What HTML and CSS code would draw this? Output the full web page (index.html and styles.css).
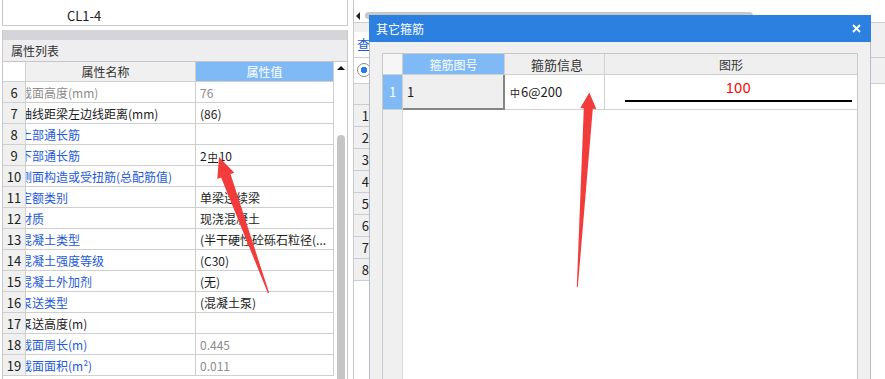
FILE: index.html
```html
<!DOCTYPE html>
<html lang="zh-CN">
<head>
  <meta charset="UTF-8">
  <meta name="viewport" content="width=device-width, initial-scale=1.0">
  <title>属性列表 - 其它箍筋</title>
  <link rel="stylesheet" href="styles.css">
</head>
<body>
  <div class="app">
    <div class="left">
      <div class="top-box"><span class="comp-name">CL1-4</span></div>
      <div class="prop-panel">
        <div class="panel-strip"></div>
        <div class="panel-title">属性列表</div>
        <div class="prop-body">
          <div class="prop-grid">
            <div class="cell num head-blank"></div>
            <div class="cell head">属性名称</div>
            <div class="cell head head-active">属性值</div>

            <div class="cell num">6</div>
            <div class="cell name gray">截面高度(mm)</div>
            <div class="cell val gray">76</div>

            <div class="cell num">7</div>
            <div class="cell name">轴线距梁左边线距离(mm)</div>
            <div class="cell val">(86)</div>

            <div class="cell num">8</div>
            <div class="cell name blue">上部通长筋</div>
            <div class="cell val"></div>

            <div class="cell num">9</div>
            <div class="cell name blue">下部通长筋</div>
            <div class="cell val">2<span class="rebar">中</span>10</div>

            <div class="cell num">10</div>
            <div class="cell name blue">侧面构造或受扭筋(总配筋值)</div>
            <div class="cell val"></div>

            <div class="cell num">11</div>
            <div class="cell name blue">定额类别</div>
            <div class="cell val">单梁连续梁</div>

            <div class="cell num">12</div>
            <div class="cell name blue">材质</div>
            <div class="cell val">现浇混凝土</div>

            <div class="cell num">13</div>
            <div class="cell name blue">混凝土类型</div>
            <div class="cell val">(半干硬性砼砾石粒径(...</div>

            <div class="cell num">14</div>
            <div class="cell name blue">混凝土强度等级</div>
            <div class="cell val">(C30)</div>

            <div class="cell num">15</div>
            <div class="cell name blue">混凝土外加剂</div>
            <div class="cell val">(无)</div>

            <div class="cell num">16</div>
            <div class="cell name blue">泵送类型</div>
            <div class="cell val">(混凝土泵)</div>

            <div class="cell num">17</div>
            <div class="cell name">泵送高度(m)</div>
            <div class="cell val"></div>

            <div class="cell num">18</div>
            <div class="cell name blue">截面周长(m)</div>
            <div class="cell val gray">0.445</div>

            <div class="cell num">19</div>
            <div class="cell name blue">截面面积(m²)</div>
            <div class="cell val gray">0.011</div>
          </div>
          <div class="vscroll">
            <span class="up-arrow"></span>
            <div class="vthumb"></div>
          </div>
        </div>
      </div>
    </div>

    <div class="splitter"></div>

    <div class="right">
      <div class="hbar">
        <span class="left-arrow"></span>
        <div class="hthumb"></div>
      </div>
      <div class="tabs">
        <div class="tab">查询</div>
      </div>
      <div class="radios">
        <div class="radio-group"><span class="radio"></span></div>
      </div>
      <div class="list">
        <div class="list-head"></div>
        <div class="list-row">1</div>
        <div class="list-row">2</div>
        <div class="list-row">3</div>
        <div class="list-row">4</div>
        <div class="list-row">5</div>
        <div class="list-row">6</div>
        <div class="list-row">7</div>
        <div class="list-row">8</div>
        <div class="list-rest"></div>
      </div>
    </div>

    <div class="dialog">
      <div class="dialog-title">
        <span>其它箍筋</span>
        <svg class="close" width="9" height="9" viewBox="0 0 9 9">
          <path d="M1 1 L8 8 M8 1 L1 8" stroke="#fff" stroke-width="1.8" fill="none"/>
        </svg>
      </div>
      <div class="dialog-body">
        <div class="stirrup-table">
          <div class="st-row st-head">
            <div class="st-cell st-num st-corner"></div>
            <div class="st-cell st-id head-active">箍筋图号</div>
            <div class="st-cell st-info">箍筋信息</div>
            <div class="st-cell st-shape">图形</div>
          </div>
          <div class="st-row st-data">
            <div class="st-cell st-num num-active">1</div>
            <div class="st-cell st-id editing">1</div>
            <div class="st-cell st-info"><span class="phi">中</span>6@200</div>
            <div class="st-cell st-shape">
              <div class="shape">
                <span class="dim">100</span>
                <div class="bar-line"></div>
              </div>
            </div>
          </div>
          <div class="st-rest">
            <div class="st-num-fill"></div>
          </div>
        </div>
      </div>
    </div>

    <svg class="marks" width="885" height="379" viewBox="0 0 885 379">
      <polygon points="219,157 234.3,172.7 230.5,174.1 269.1,292.8 267.9,293.2 221.1,177.5 217.3,178.9" fill="#f23b3b"/>
      <polygon points="589.3,92.5 596.3,109 592.8,108.8 577.8,287 576.8,287 583.8,108.2 580.3,108" fill="#f23b3b"/>
    </svg>
  </div>
</body>
</html>
```

FILE: styles.css
```css
* {
  box-sizing: border-box;
}

html, body {
  margin: 0;
  width: 885px;
  height: 379px;
  overflow: hidden;
}

body {
  font-family: "Noto Sans CJK SC", "Noto Sans", sans-serif;
  font-size: 12px;
  color: #1c1c1c;
  background: #fff;
}

.app {
  position: relative;
  display: flex;
  height: 379px;
  overflow: hidden;
}

/* left: property list */

.left {
  width: 348px;
  padding-left: 2px;
  display: flex;
  flex-direction: column;
}

.top-box {
  height: 26px;
  border: 1px solid #c9c9c9;
  border-top: none;
  padding: 6px 0 0 64px;
  line-height: 20px;
  font-size: 13px;
}

.prop-panel {
  flex: 1;
  min-height: 0;
  margin-top: 4px;
  border-left: 1px solid #c9c9c9;
  border-right: 1px solid #c9c9c9;
  display: flex;
  flex-direction: column;
}

.panel-strip {
  height: 10px;
  background: #d5d5d9;
}

.panel-title {
  height: 22px;
  line-height: 21px;
  padding-left: 8px;
  background: #eeeef0;
  border-bottom: 1px solid #c6c6c6;
  color: #333;
}

.prop-body {
  flex: 1;
  min-height: 0;
  display: flex;
  overflow: hidden;
}

.prop-grid {
  width: 331px;
  display: grid;
  grid-template-columns: 23px 170px 138px;
  grid-template-rows: 20px;
  grid-auto-rows: 21px;
  align-content: start;
  overflow: hidden;
}

.cell {
  border-right: 1px solid #cfcfcf;
  border-bottom: 1px solid #cfcfcf;
  line-height: 22px;
  white-space: nowrap;
  overflow: hidden;
}

.num {
  background: #f0f0f0;
  text-align: center;
  font-size: 13px;
  color: #222;
}

.head-blank {
  background: #fff;
}

.head {
  background: #f0f0f0;
  text-align: center;
  padding-right: 10px;
  line-height: 20px;
  color: #333;
}

.head-active {
  background: #7fbaf6;
  color: #fff;
}

.prop-grid .head-active {
  padding-right: 0;
}

.name {
  text-indent: -6px;
}

.val {
  padding-left: 4px;
}

.blue {
  color: #2459d8;
}

.gray {
  color: #8c8c8c;
}

.rebar {
  display: inline-block;
  font-size: 10px;
  line-height: 11px;
  border-bottom: 1px solid #1c1c1c;
  margin: 0 1px;
}

.vscroll {
  position: relative;
  width: 13px;
}

.up-arrow {
  position: absolute;
  top: 4px;
  left: 3px;
  border-left: 4px solid transparent;
  border-right: 4px solid transparent;
  border-bottom: 4px solid #111;
}

.vthumb {
  position: absolute;
  top: 73px;
  bottom: 0;
  left: 3px;
  width: 8px;
  border-radius: 4px 4px 0 0;
  background: #c5c5c5;
}

.splitter {
  width: 5px;
}

/* right: partly hidden list */

.right {
  flex: 1;
  border-left: 1px solid #c9c9c9;
  display: flex;
  flex-direction: column;
}

.hbar {
  height: 23px;
  border-bottom: 1px solid #cdcdcd;
  display: flex;
  align-items: center;
  padding: 9px 0 0 2px;
  column-gap: 5px;
}

.left-arrow {
  border-top: 4px solid transparent;
  border-bottom: 4px solid transparent;
  border-right: 4px solid #222;
}

.hthumb {
  width: 388px;
  height: 7px;
  border-radius: 4px;
  background: #c8c8c8;
}

.tabs {
  height: 35px;
  background: #f0f0f0;
  border-bottom: 1px solid #cdcdcd;
  display: flex;
  align-items: flex-end;
}

.tab {
  width: 80px;
  height: 25px;
  line-height: 24px;
  padding-left: 3px;
  background: #fff;
  color: #2459d8;
  font-size: 13px;
}

.radios {
  height: 26px;
  background: #f0f0f0;
  border-bottom: 1px solid #cdcdcd;
}

.radio-group {
  width: 300px;
  height: 100%;
  background: #fff;
  padding: 5px 0 0 3px;
}

.radio {
  display: block;
  width: 14px;
  height: 14px;
  border-radius: 50%;
  border: 1px solid #8a8a8a;
  background: radial-gradient(circle, #2a7ce0 0 3px, #fff 3.5px);
}

.list {
  flex: 1;
  display: flex;
  flex-direction: column;
}

.list-head {
  height: 21px;
  width: 16px;
  background: #f0f0f0;
  border-bottom: 1px solid #c9ccd6;
}

.list-row {
  height: 22px;
  width: 16px;
  background: #f0f0f0;
  border-bottom: 1px solid #c9ccd6;
  text-align: right;
  padding-right: 1px;
  line-height: 22px;
  font-size: 13px;
  color: #222;
}

.list-rest {
  flex: 1;
}

/* dialog */

.dialog {
  position: absolute;
  left: 369px;
  top: 15px;
  width: 502px;
  bottom: 0;
  display: flex;
  flex-direction: column;
  border-left: 1px solid #b7bdcb;
  border-right: 1px solid #b7bdcb;
  background: #f0f0f0;
}

.dialog-title {
  height: 27px;
  margin: 0 -1px;
  padding: 0 10px 0 7px;
  display: flex;
  align-items: center;
  justify-content: space-between;
  background: #2c80e0;
  color: #fff;
}

.dialog-body {
  flex: 1;
  display: flex;
  padding: 11px 12px 0;
}

.stirrup-table {
  flex: 1;
  display: flex;
  flex-direction: column;
  background: #fff;
  border: 1px solid #c8c8c8;
  border-bottom: none;
}

.st-row {
  display: flex;
}

.st-head {
  height: 21px;
  line-height: 21px;
}

.st-data {
  height: 35px;
  line-height: 33px;
}

.st-cell {
  border-right: 1px solid #d0d0d0;
  border-bottom: 1px solid #d0d0d0;
  white-space: nowrap;
}

.st-head .st-cell {
  background: #efefef;
  text-align: center;
  color: #333;
}

.st-head .st-corner {
  background: #f6f6f6;
}

.st-head .head-active {
  background: #7fbaf6;
  color: #fff;
}

.st-num {
  width: 20px;
  text-align: center;
}

.num-active {
  background: #7fbaf6;
  color: #fff;
  font-size: 13px;
}

.st-id {
  width: 102px;
}

.st-info {
  width: 100px;
  padding-left: 5px;
  font-size: 13px;
}

.st-shape {
  flex: 1;
  border-right: none;
}

.editing {
  background: #efefef;
  border-right: 2px solid #858585;
  border-bottom: 2px solid #858585;
  padding-left: 4px;
  font-size: 13px;
}

.phi {
  font-size: 10px;
  margin-right: 1px;
}

.shape {
  margin: 0 5px 0 20px;
  height: 100%;
  display: flex;
  flex-direction: column;
  align-items: center;
  padding-top: 4px;
}

.dim {
  font-family: "Liberation Sans", sans-serif;
  font-size: 14px;
  line-height: 18px;
  letter-spacing: 0.5px;
  color: #f00;
}

.bar-line {
  align-self: stretch;
  height: 2px;
  margin-top: 3px;
  background: #000;
}

.st-rest {
  flex: 1;
  display: flex;
}

.st-num-fill {
  width: 20px;
  background: #f0f0f0;
  border-right: 1px solid #dadada;
}

/* annotation arrows */

.marks {
  position: absolute;
  left: 0;
  top: 0;
  pointer-events: none;
}
```
